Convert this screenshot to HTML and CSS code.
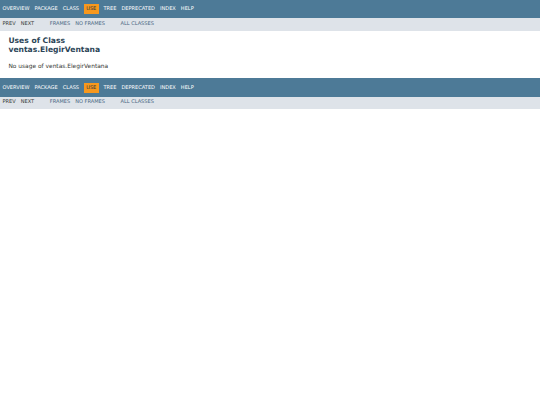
FILE: index.html
```html
<!DOCTYPE html>
<html lang="es">
<head>
<meta charset="utf-8">
<title>Uses of Class ventas.ElegirVentana</title>
<link rel="stylesheet" href="styles.css">
</head>
<body>
<div class="top-nav">
  <ul class="nav-list">
    <li><a href="#">Overview</a></li>
    <li><a href="#">Package</a></li>
    <li><a href="#">Class</a></li>
    <li class="nav-cell-rev">Use</li>
    <li><a href="#">Tree</a></li>
    <li><a href="#">Deprecated</a></li>
    <li><a href="#">Index</a></li>
    <li><a href="#">Help</a></li>
  </ul>
</div>
<div class="sub-nav">
  <ul class="nav-list">
    <li>Prev</li>
    <li>Next</li>
  </ul>
  <ul class="nav-list">
    <li><a href="#">Frames</a></li>
    <li><a href="#">No&nbsp;Frames</a></li>
  </ul>
  <ul class="nav-list">
    <li><a href="#">All&nbsp;Classes</a></li>
  </ul>
</div>
<div class="header">
  <h2 class="title">Uses of Class<br>ventas.ElegirVentana</h2>
</div>
<div class="class-use-container">No usage of ventas.ElegirVentana</div>
<div class="top-nav bottom-nav">
  <ul class="nav-list">
    <li><a href="#">Overview</a></li>
    <li><a href="#">Package</a></li>
    <li><a href="#">Class</a></li>
    <li class="nav-cell-rev">Use</li>
    <li><a href="#">Tree</a></li>
    <li><a href="#">Deprecated</a></li>
    <li><a href="#">Index</a></li>
    <li><a href="#">Help</a></li>
  </ul>
</div>
<div class="sub-nav">
  <ul class="nav-list">
    <li>Prev</li>
    <li>Next</li>
  </ul>
  <ul class="nav-list">
    <li><a href="#">Frames</a></li>
    <li><a href="#">No&nbsp;Frames</a></li>
  </ul>
  <ul class="nav-list">
    <li><a href="#">All&nbsp;Classes</a></li>
  </ul>
</div>
</body>
</html>
```
FILE: styles.css
```css
html, body {
  margin: 0;
  padding: 0;
}
body {
  background: #ffffff;
  color: #353833;
  font-family: "DejaVu Sans", Arial, Helvetica, sans-serif;
  font-size: 5.9px;
  line-height: 1.164;
}
a {
  text-decoration: none;
}
.top-nav {
  background-color: #4d7a97;
  color: #ffffff;
  font-size: 5.06px;
  height: 14.2px;
  padding-top: 4.22px;
  overflow: hidden;
}
.bottom-nav {
  margin-top: 4.22px;
}
.top-nav a {
  color: #ffffff;
}
.sub-nav {
  background-color: #dee3e9;
  font-size: 5.06px;
  display: flex;
  padding-bottom: 2.11px;
}
.sub-nav a {
  color: #4a6782;
}
.nav-list {
  display: flex;
  list-style: none;
  margin: 0 10.55px 0 0;
  padding: 0;
}
.nav-list li {
  padding: 2.11px 2.53px;
  text-transform: uppercase;
  white-space: nowrap;
}
.nav-cell-rev {
  background-color: #f8981d;
  color: #253441;
  margin: 0 2.11px;
}
.header {
  margin: 0 8.44px;
  padding-top: 2.11px;
}
.title {
  color: #2c4557;
  font-size: 7.6px;
  line-height: 1.164;
  font-weight: bold;
  margin: 4.22px 0;
}
.class-use-container {
  padding: 4.22px 8.44px;
}
```
